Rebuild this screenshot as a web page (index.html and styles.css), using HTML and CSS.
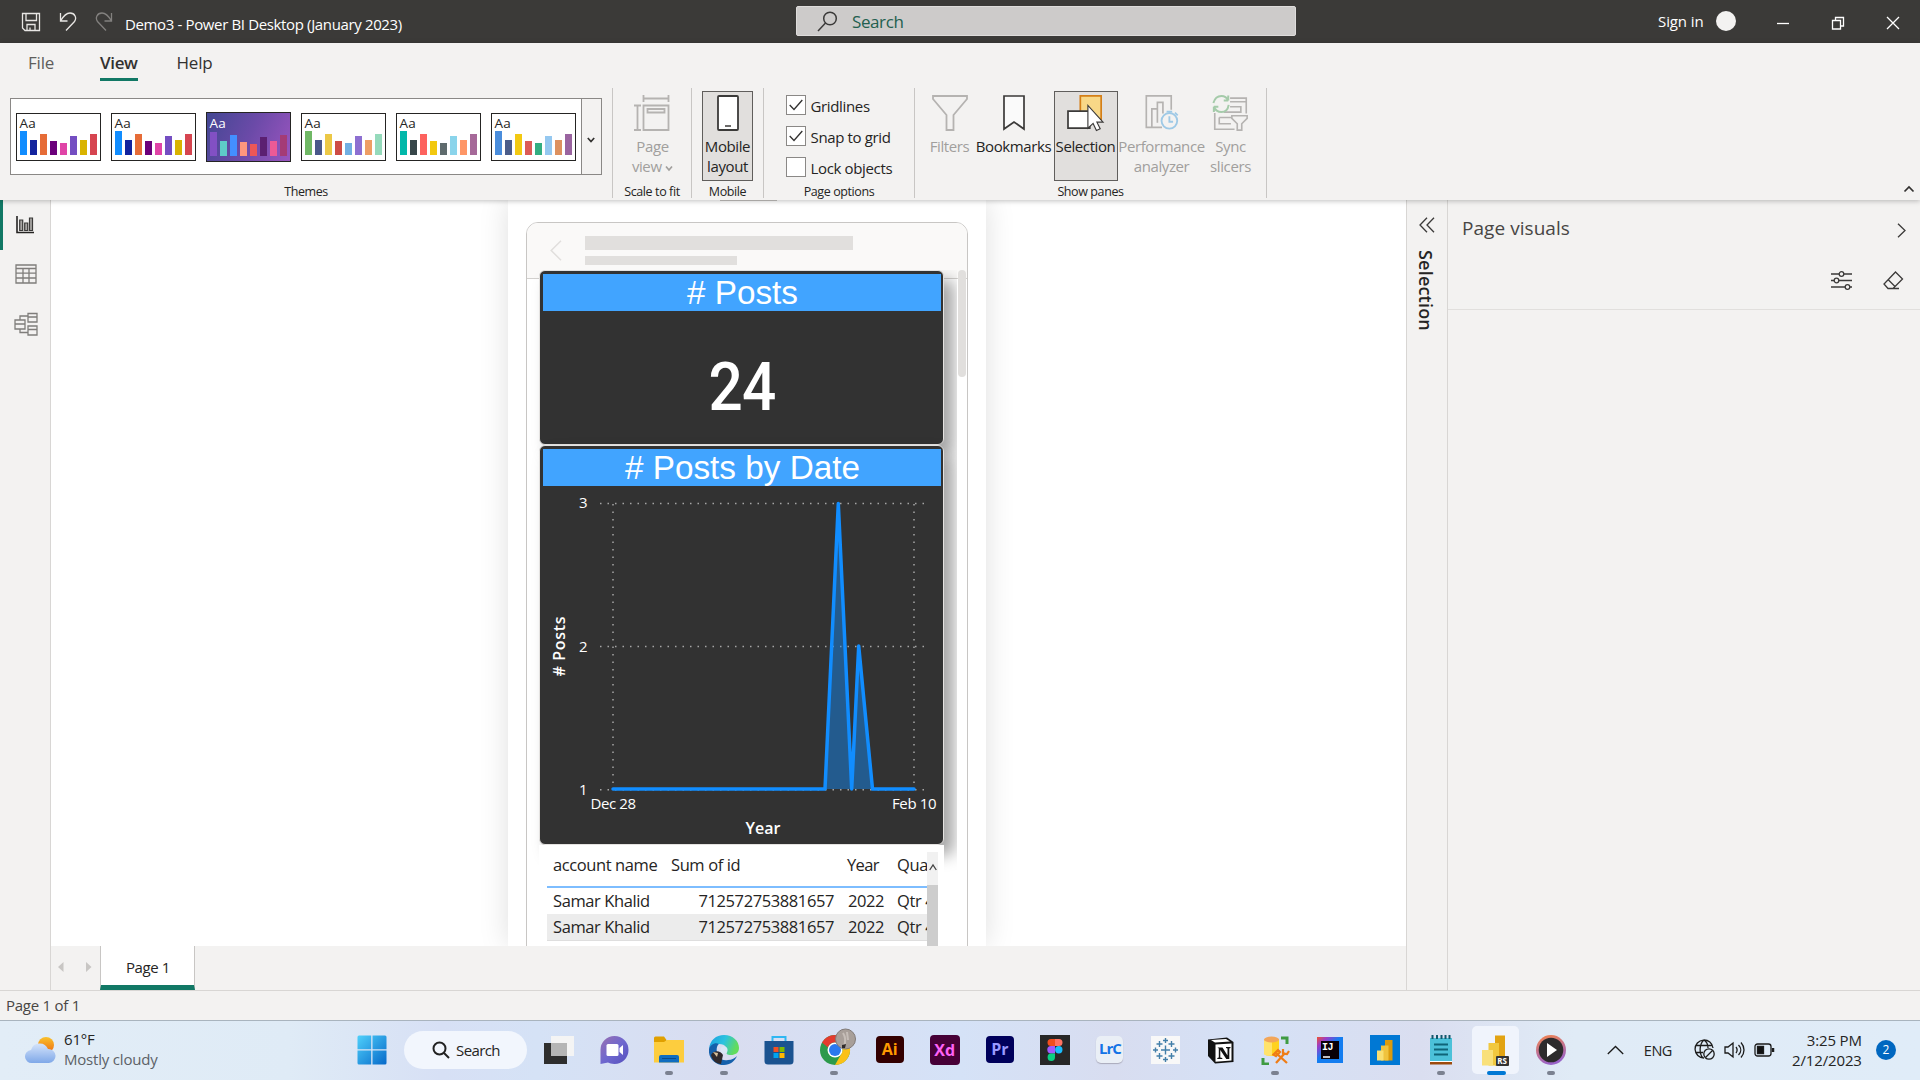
FILE: index.html
```html
<!DOCTYPE html>
<html lang="en">
<head>
<meta charset="utf-8">
<title>Demo3 - Power BI Desktop (January 2023)</title>
<link rel="stylesheet" href="styles.css">
</head>
<body>
<header class="titlebar">
  <div class="quick">
    <svg width="20" height="20" viewBox="0 0 20 20" class="ln"><path d="M1.5 1.500h17v17H4L1.500 16zM5 1.500v7h10.500v-7M6 18.500v-6h8v6M9 18.500v-3"/></svg>
    <svg width="18" height="20" viewBox="0 0 18 20" class="ln"><path d="M1.500 1v8h7M1.500 9C5 3 8 1 11 1c5 0 7 5 4.500 8.500L7 18.500"/></svg>
    <svg width="18" height="20" viewBox="0 0 18 20" class="ln dim"><path d="M16.500 1v8h-7M16.500 9C13 3 10 1 7 1 2 1 0 6 2.500 9.500L11 18.500"/></svg>
    <span class="doc">Demo3 - Power BI Desktop (January 2023)</span>
  </div>
  <div class="search">
    <svg width="21" height="21" viewBox="0 0 21 21"><circle cx="13" cy="7.500" r="6.300"/><path d="M8.500 12 1 20"/></svg>
    <span>Search</span>
  </div>
  <div class="account"><span>Sign in</span><i class="avatar"></i></div>
  <div class="winctl">
    <svg width="14" height="14" viewBox="0 0 14 14"><path d="M1 7.500h12"/></svg>
    <svg width="14" height="14" viewBox="0 0 14 14"><path d="M1.500 4.500h8v8.500h-8zM4.500 4V1.500h8v8.500H10"/></svg>
    <svg width="14" height="14" viewBox="0 0 14 14"><path d="M1 1l12 12M13 1 1 13"/></svg>
  </div>
</header>

<section class="ribbon">
  <nav class="menu"><a class="file">File</a><a class="active">View</a><a>Help</a></nav>
  <div class="groups">
    <div class="group themes">
      <div class="gallery">
        <div class="thumb t1"><b>Aa</b><i></i></div>
        <div class="thumb t1"><b>Aa</b><i></i></div>
        <div class="thumb t3"><b>Aa</b><i></i></div>
        <div class="thumb t4"><b>Aa</b><i></i></div>
        <div class="thumb t5"><b>Aa</b><i></i></div>
        <div class="thumb t6"><b>Aa</b><i></i></div>
        <div class="drop"><svg width="8" height="6" viewBox="0 0 8 6"><path d="M.8 1 4 4.500 7.200 1"/></svg></div>
      </div>
      <span class="glabel">Themes</span>
    </div>
    <div class="group scale">
      <div class="btn off">
        <svg width="36" height="36" viewBox="0 0 36 36"><path class="g" d="M9.500 10.500h25v24.500h-25zM13.500 14h17v3.500h-17z"/><path class="g" d="M9.500 0v7M34.500 0v7M9.500 3.500h25M0 10.500h7M0 35h7M3.500 10.500V35"/></svg>
        <span>Page<br>view <svg width="8" height="7" viewBox="0 0 8 7"><path d="M1 1.500 4 5l3-3.500" fill="none" stroke="#a19f9d" stroke-width="1.700"/></svg></span>
      </div>
      <span class="glabel">Scale to fit</span>
    </div>
    <div class="group mobile">
      <div class="btn on">
        <svg width="22" height="36" viewBox="0 0 22 36"><rect x="1" y="1" width="20" height="34" rx="1" fill="#fff" stroke="#3b3a39" stroke-width="1.800"/><path d="M8 31h6" stroke="#3b3a39" stroke-width="1.500"/></svg>
        <span>Mobile<br>layout</span>
      </div>
      <span class="glabel">Mobile</span>
    </div>
    <div class="group options">
      <div class="checks">
        <label><i><svg width="14" height="12" viewBox="0 0 14 12"><path d="M.7 6 5 10.500 13.300 1"/></svg></i><span>Gridlines</span></label>
        <label><i><svg width="14" height="12" viewBox="0 0 14 12"><path d="M.7 6 5 10.500 13.300 1"/></svg></i><span>Snap to grid</span></label>
        <label><i></i><span>Lock objects</span></label>
      </div>
      <span class="glabel">Page options</span>
    </div>
    <div class="group panes">
      <div class="prow">
        <div class="btn off filters">
          <svg width="36" height="36" viewBox="0 0 36 36"><path class="g" d="M1 1h34v3L21.500 20v15h-7V20L1 4z"/></svg><span>Filters</span>
        </div>
        <div class="btn bookmarks">
          <svg width="22" height="36" viewBox="0 0 22 36"><path d="M1 1h20v33l-10-7-10 7z" fill="#fafafa" stroke="#3b3a39" stroke-width="1.700"/></svg><span>Bookmarks</span>
        </div>
        <div class="btn on selection">
          <svg width="40" height="38" viewBox="0 0 40 38"><path d="M14 1h22v25H14z" fill="#f8d887" stroke="#d47f17" stroke-width="1.800"/><path d="M1 17h23v18H1z" fill="#fff" stroke="#3b3a39" stroke-width="1.800"/><path d="M22 11v24l5.500-5 3.500 7.500 4-1.800-3.500-7H38z" fill="#fff" stroke="#3b3a39" stroke-width="1.200"/></svg><span>Selection</span>
        </div>
        <div class="btn off perf">
          <svg width="36" height="39" viewBox="0 0 36 39"><path class="g" d="M18 35H1V1h27v15M7 35V15h6v15M13 30V8h6v12"/><circle cx="26" cy="28" r="8.500" fill="#f3f2f1" stroke="#9ec9e6" stroke-width="2"/><path d="M26 23v6h4M23 18h6M32 19l3 3" fill="none" stroke="#9ec9e6" stroke-width="2"/></svg><span>Performance<br>analyzer</span>
        </div>
        <div class="btn off sync">
          <svg width="41" height="40" viewBox="0 0 41 40"><path class="g" d="M20 3.500h18v17M20 7.500h18M20 13h12v6H13M3 20v18h22M8 25h14M8 25v7h13"/><path class="g" fill="#f3f2f1" d="M22 23h17v3l-6 6v7h-5v-7l-6-6z"/><path d="M1.500 9C3 3 7 1 10.500 1s6 2 7.500 5V.5M18 6h-5M18.500 11c-1 6-4.500 8-8 8s-7-2-8.500-6v6M2 13h5" fill="none" stroke="#a5cbaa" stroke-width="2.200"/></svg><span>Sync<br>slicers</span>
        </div>
      </div>
      <span class="glabel">Show panes</span>
    </div>
    <svg class="collapse" width="12" height="8" viewBox="0 0 12 8"><path d="M1.500 6.500 6 2l4.500 4.500"/></svg>
  </div>
</section>

<main class="main">
  <aside class="rail">
    <div class="rb active"><svg width="18" height="18" viewBox="0 0 18 18"><path d="M1 0v16.500h17" stroke="#252423" stroke-width="1.600"/><path d="M3.700 4h3v10.500h-3zM8.700 7h3v7.500h-3zM13.500 2h3v12.500h-3z" fill="#a8a6a4" stroke="#3b3a39" stroke-width="1.200"/></svg></div>
    <div class="rb"><svg width="22" height="20" viewBox="0 0 22 20"><path d="M1 1h20v18H1zM1 4.500h20M1 9.200h20M1 14h20M8 4.500V19M14 4.500V19"/></svg></div>
    <div class="rb"><svg width="24" height="24" viewBox="0 0 24 24"><path d="M1 8h10v9H1zM1 12h10M14 1.500h9V10h-9zM14 5h9M14 14h9v9h-9zM14 17.500h9M6 8V4h8M6 17v3.500h8"/></svg></div>
  </aside>
  <section class="work">
    <div class="canvas">
      <i class="grip"></i>
      <div class="page">
        <div class="phone">
          <div class="phead">
            <svg width="12" height="21" viewBox="0 0 12 21"><path d="M11 .8 1.200 10.500 11 20.200" fill="none" stroke="#e1dfdd" stroke-width="1.500"/></svg>
            <div class="skeleton"><i></i><i></i></div>
          </div>
          <div class="pbody">
            <div class="visuals">
              <article class="card c1"><h2># Posts</h2><p>24</p></article>
              <article class="card c2"><h2># Posts by Date</h2>
                <svg class="chart" width="403" height="356" viewBox="540 486 403 356">
                  <g class="grid"><path d="M600 503.500h325M600 646.500h325M600 789.700h325"/><path d="M613 504v286M914 504v286"/></g>
                  <path class="area" d="M825 789 838.500 503 852 789zM852 789 858.500 646 872.500 789z"/>
                  <path class="line" d="M613 789H825L838.300 503.500 851.700 789 858.700 646 872.500 789H914"/>
                  <g class="ticks">
                    <text x="579" y="508" textLength="8.500">3</text><text x="579" y="652" textLength="8.500">2</text><text x="579" y="795" textLength="8.500">1</text>
                    <text x="590.500" y="809" textLength="45.500">Dec 28</text><text x="892" y="809" textLength="44.500">Feb 10</text>
                  </g>
                  <text class="axis" x="745.500" y="834" textLength="35">Year</text>
                  <text class="axis" transform="translate(564.800 676.500) rotate(-90)" textLength="60"># Posts</text>
                </svg>
              </article>
              <div class="tablewrap">
                <div class="table">
                  <div class="tr th"><span>account name</span><span>Sum of id</span><span>Year</span><span>Quarter</span></div>
                  <div class="tr"><span>Samar Khalid</span><span>712572753881657</span><span>2022</span><span>Qtr 4</span></div>
                  <div class="tr alt"><span>Samar Khalid</span><span>712572753881657</span><span>2022</span><span>Qtr 4</span></div>
                </div>
                <div class="vscroll"><svg width="8" height="8" viewBox="0 0 8 8"><path d="M.7 7 4 2l3.300 5" fill="none" stroke="#444" stroke-width="1.300"/></svg><i></i></div>
              </div>
            </div>
            <i class="pscroll"></i>
          </div>
        </div>
      </div>
    </div>
    <div class="tabs">
      <div class="arrows"><svg width="35" height="12" viewBox="0 0 35 12"><path d="M6.500 1v10L1 6zM29 1v10l5.500-5z" fill="#c8c6c4"/></svg></div>
      <div class="tab">Page 1</div>
    </div>
  </section>
  <aside class="selpane">
    <svg width="16" height="16" viewBox="0 0 16 16"><path d="M8 .8 1 8l7 7.200M15 .8 8 8l7 7.200"/></svg>
    <span>Selection</span>
  </aside>
  <aside class="visualpane">
    <div class="vtop"><h3>Page visuals</h3><svg width="9" height="15" viewBox="0 0 9 15"><path d="M1 .7 8 7.500 1 14.300"/></svg></div>
    <div class="vtools">
      <svg width="21" height="19" viewBox="0 0 21 19"><path d="M0 3h8M13 3h8M0 9.500h3M8 9.500h13M0 16h14M19 16h2"/><circle cx="10.500" cy="3" r="2.300"/><circle cx="5.500" cy="9.500" r="2.300"/><circle cx="16.500" cy="16" r="2.300"/></svg>
      <svg width="21" height="19" viewBox="0 0 21 19"><path d="M12.500 1 19.500 8 10 17.500H5L1 13zM5 8.500l7 7M5 17.500h11"/></svg>
    </div>
  </aside>
</main>
<div class="status">Page 1 of 1</div>

<footer class="taskbar">
  <div class="weather">
    <svg width="31" height="27" viewBox="0 0 31 27"><defs><linearGradient id="sun" x2="0" y2="1"><stop stop-color="#f9c22c"/><stop offset="1" stop-color="#ee6b12"/></linearGradient><linearGradient id="cl" x2="0" y2="1"><stop stop-color="#d5e4fb"/><stop offset="1" stop-color="#7fa8e8"/></linearGradient></defs><circle cx="21" cy="8" r="8" fill="url(#sun)"/><path d="M7 26a6.500 6.500 0 0 1-1-13 9 9 0 0 1 17-1 7 7 0 0 1 1 14z" fill="url(#cl)"/></svg>
    <span>61°F<br><em>Mostly cloudy</em></span>
  </div>
  <div class="apps">
    <div class="app win"><svg width="30" height="30" viewBox="0 0 30 30"><defs><linearGradient id="w" x2="1" y2="1"><stop stop-color="#4fd0fb"/><stop offset="1" stop-color="#0669c9"/></linearGradient></defs><path d="M2 .5h12.200v13.700H.500V2A1.500 1.500 0 0 1 2 .500zM15.500.500H28A1.500 1.500 0 0 1 29.500 2v12.200h-14zM.500 15.500h13.700v14H2A1.500 1.500 0 0 1 .500 28zM15.500 15.500h14V28a1.500 1.500 0 0 1-1.500 1.500H15.500z" fill="url(#w)"/></svg></div>
    <div class="pill"><svg width="18" height="18" viewBox="0 0 18 18"><circle cx="7.500" cy="7.500" r="6" fill="none" stroke="#222" stroke-width="2"/><path d="m12 12 5 5" stroke="#222" stroke-width="2"/></svg><span>Search</span></div>
    <div class="app"><svg width="30" height="28" viewBox="0 0 30 28"><path d="M0 7h23v21H0z" fill="#2e2e2e"/><path d="M7 0h23v20H7z" fill="#f4f4f4"/><path d="M7 7h16v13H7z" fill="#b5b5b5"/></svg></div>
    <div class="app"><svg width="29" height="28" viewBox="0 0 29 28"><defs><linearGradient id="ch" x2="1" y2="1"><stop stop-color="#9a70b0"/><stop offset=".5" stop-color="#6f68cf"/><stop offset="1" stop-color="#5550bd"/></linearGradient></defs><path d="M.500 28V14a14 14 0 1 1 14 14c-3 0-5-1-6.500-1.500z" fill="url(#ch)"/><rect x="6.500" y="8" width="12" height="12" rx="1.500" fill="#fff"/><path d="M19.500 12 23 9v10l-3.500-3z" fill="#fff"/></svg></div>
    <div class="app run"><svg width="30" height="28" viewBox="0 0 30 28"><path d="M0 2a1.500 1.500 0 0 1 1.500-1.500H10L12.500 4v5H0z" fill="#e0a000"/><path d="M0 6h10l3-2h17v22.500H0z" fill="#fdcd3e"/><path d="M5 26.500V21a2 2 0 0 1 2-2h16a2 2 0 0 1 2 2v5.500z" fill="#0f6dc0"/><path d="M8 22.500h14" stroke="#0a4a8a"/></svg></div>
    <div class="app run"><svg width="30" height="30" viewBox="0 0 30 30"><defs><linearGradient id="eg" x2="1" y2=".3"><stop stop-color="#1b9de0"/><stop offset=".55" stop-color="#2cc3df"/><stop offset="1" stop-color="#63dc5b"/></linearGradient></defs><path d="M0 14C1 5 7 0 15 0c9 0 15 6 15 13 0 5-4 7-8 7-4 0-5-1-4-3 1-3-1-8-8-8-5 0-9 2-10 5z" fill="url(#eg)"/><path d="M0 14c1-4 6-7 10-5-4 2-4 18 9 16 4 0 7-2 9-4-2 5-7 9-13 9C6 30-1 23 0 14z" fill="#1560ab"/><path d="M2 20c3-6 10-4 12 0l-2 9C7 29 3 25 2 20z" fill="#302a2d"/><circle cx="15" cy="15" r="3.500" fill="#d9e7f5"/><path d="M4 17l5 1-1 4z" fill="#d7c09b"/></svg></div>
    <div class="app"><svg width="30" height="30" viewBox="0 0 30 30"><path d="M8.500 7V2h13v5" fill="none" stroke="#30b7f2" stroke-width="2"/><path d="M.500 6h29v20a3.500 3.500 0 0 1-3.500 3.500H4A3.500 3.500 0 0 1 .500 26z" fill="#1b5390"/><path d="M9.500 12h5v5h-5z" fill="#f25022"/><path d="M15.500 12h5v5h-5z" fill="#7fba00"/><path d="M9.500 18h5v5h-5z" fill="#00a4ef"/><path d="M15.500 18h5v5h-5z" fill="#ffb900"/></svg></div>
    <div class="app run"><svg class="chrome" width="38" height="38" viewBox="0 -7 38 38"><circle cx="15" cy="15" r="15" fill="#2c9a4b"/><path d="M2 7.500A15 15 0 0 1 28 7.500H15a7.500 7.500 0 0 0-7 5z" fill="#e33b2e"/><path d="M28 7.500A15 15 0 0 1 15 30l6.500-11.500A7.500 7.500 0 0 0 21 10V7.500z" fill="#fbc116"/><circle cx="15" cy="15" r="7.500" fill="#fff"/><circle cx="15" cy="15" r="6" fill="#2b78ee"/><circle cx="25.500" cy="4" r="10" fill="#a89f99" stroke="#817a77"/><path d="M23 -2c2 3 3 8 1 13M27-3l1 8" fill="none" stroke="#c6beb8" stroke-width="2"/><path d="M22 10l4-1-1 4h-3z" fill="#2f2b2b"/></svg></div>
    <div class="app"><div class="adobe ai">Ai</div></div>
    <div class="app"><div class="adobe xd">Xd</div></div>
    <div class="app"><div class="adobe pr">Pr</div></div>
    <div class="app"><svg width="30" height="30" viewBox="0 0 30 30"><path d="M0 0h30v30H0z" fill="#272727"/><path d="M15 4h-4a3.500 3.500 0 0 0 0 7h4z" fill="#f24e1e"/><path d="M15 4h4a3.500 3.500 0 0 1 0 7h-4z" fill="#ff7262"/><path d="M15 11h-4a3.700 3.700 0 0 0 0 7.400h4z" fill="#a259ff"/><circle cx="18.800" cy="14.700" r="3.700" fill="#1abcfe"/><path d="M15 18.500h-4a3.700 3.700 0 1 0 4 3.700z" fill="#0acf83"/></svg></div>
    <div class="app"><div class="lrc">LrC</div></div>
    <div class="app"><svg width="29" height="28" viewBox="0 0 29 28"><path d="M0 0h29v28H0z" fill="#f8f8f8"/><path d="M14.500 9.500v9M10 14h9M14.500 2v5M12 4.500h5M14.500 21v5M12 23.500h5M4.500 11.500v5M2 14h5M24.500 11.500v5M22 14h5M8.500 5v6M5.500 8h6M20.500 5v6M17.500 8h6M8.500 17v6M5.500 20h6M20.500 17v6M17.500 20h6" stroke="#437fa9" stroke-width="1.400"/></svg></div>
    <div class="app"><svg width="27" height="27" viewBox="0 0 27 27"><path d="M1 2.500 20 .5l6.500 4.500V25L8 26.500 1 19z" fill="#111"/><path d="M4 3 19 2l4 2.500L8 5.500z" fill="#fff"/><path d="M8.500 7.500 24.500 6.500v17l-16 1.200z" fill="#fff"/><path d="M10.500 10.500h5l5 8v-7l-1.500-.500V10h4.500v1l-1.200.500V22h-3l-6-9v7.500l2 .500v1h-5v-1l1.500-.500v-9z" fill="#111"/></svg></div>
    <div class="app run"><svg width="29" height="29" viewBox="0 0 29 29"><path d="M3 3v14c0 4 15 4 15 0V3z" fill="#ffd21f"/><path d="M3 3v15c1 2 6 2 8 1.500V5z" fill="#ffe36b"/><ellipse cx="10.500" cy="3.500" rx="7.500" ry="3" fill="#f2a65a"/><path d="M20 2h6v6M2 22v6h6" fill="none" stroke="#3f9b42" stroke-width="3"/><path d="m15 27 9-10M15 17l11 10" stroke="#ef7d16" stroke-width="2.300"/><path d="M12.500 18.500 17 14l2 2-4 4zM22 13v4.500l4 .5 2-3" fill="none" stroke="#ef7d16" stroke-width="2.200"/></svg></div>
    <div class="app"><svg width="26" height="26" viewBox="0 0 26 26"><defs><linearGradient id="ij" x2="1" y2="1"><stop stop-color="#f0532d"/><stop offset=".2" stop-color="#9a3bc9"/><stop offset=".45" stop-color="#147df0"/><stop offset="1" stop-color="#147df0"/></linearGradient></defs><path d="M0 0h26v26H0z" fill="url(#ij)"/><path d="M4 4h18v18H4z" fill="#080008"/><text x="5" y="13" class="ijt">IJ</text><path d="M6 20h7" stroke="#fff" stroke-width="1.500"/></svg></div>
    <div class="app"><svg width="30" height="30" viewBox="0 0 30 30"><path d="M0 0h30v30H0z" fill="#0078d4"/><path d="M15 5h7.500v20.500H15z" fill="#dc9b0d"/><path d="M11 10.500h7.500v15H11z" fill="#f0c33e"/><path d="M7 15.500h6.500v10H7z" fill="#f9df72"/></svg></div>
    <div class="app run"><svg width="22" height="30" viewBox="0 0 22 30"><path d="M0 26h22v3.500H0z" fill="#9c4a0d"/><path d="M0 3h22v24H0z" fill="#4cc1d9"/><path d="M0 26.500h22" stroke="#fff"/><path d="M2.500 0v4M7 0v4M11.500 0v4M15.500 0v4M19.500 0v4" stroke="#13586d" stroke-width="2"/><path d="M4 9.500h14M4 14.500h14M4 19.500h14" stroke="#0f6478" stroke-width="2"/></svg></div>
    <div class="app current"><svg width="28" height="31" viewBox="0 0 28 31"><path d="M13 .500h10v30H13z" fill="#e2a312"/><path d="M6.500 8h10.500v22.500H6.500z" fill="#f1c83f"/><path d="M0 15h11v15.500H0z" fill="#f9e07a"/><rect x="14" y="21" width="13" height="10" rx="1" fill="#333"/><text x="15.300" y="29" class="rst">RS</text></svg></div>
    <div class="app run"><svg width="30" height="30" viewBox="0 0 30 30"><defs><linearGradient id="mp" x2=".3" y2="1"><stop stop-color="#f5854a"/><stop offset="1" stop-color="#9a63c8"/></linearGradient></defs><circle cx="15" cy="15" r="15" fill="url(#mp)"/><circle cx="15" cy="15" r="12.300" fill="#2d2b2c"/><path d="M11 8v14l10-7z" fill="#fff"/></svg></div>
  </div>
  <div class="tray">
    <svg class="tl up" width="17" height="10" viewBox="0 0 17 10"><path d="M.8 9 8.500 1.500 16.200 9"/></svg>
    <span class="eng">ENG</span>
    <svg class="tl" width="21" height="21" viewBox="0 0 21 21"><path d="M10 19A9 9 0 1 1 19 9M10 1C5 5 5 15 9 19M10 1c3 2 4 5 4 8M2 6.500h16M2 13.500h7"/><circle cx="15" cy="15" r="5.200"/><path d="m11.500 18.500 7-7"/></svg>
    <svg class="tl spk" width="21" height="18" viewBox="0 0 21 18"><path d="M1 6v6h3l5 4V2L4 6zM12 6c1.500 2 1.500 4 0 6M14.500 4c3 3 3 7 0 10M17 1.500c4 4.500 4 10.500 0 15"/></svg>
    <svg class="tl" width="21" height="14" viewBox="0 0 21 14"><rect x="1" y="1" width="16" height="12" rx="2.500"/><path d="M3.500 3.500h6v7h-6z" fill="#111"/><path d="M19 5v4" stroke-width="2.500"/></svg>
    <span class="clock">3:25 PM<br>2/12/2023</span>
    <span class="badge">2</span>
  </div>
</footer>
</body>
</html>
```
FILE: styles.css
```css
* { box-sizing: border-box; }
body {
  margin: 0; width: 1920px; height: 1080px; overflow: hidden;
  display: flex; flex-direction: column;
  font: 15px/20px "Open Sans", "Noto Sans", sans-serif;
  letter-spacing: -0.03em; color: #252423; background: #f3f2f1;
}
svg { display: block; flex: none; }
i, em { font-style: normal; }

/* title bar */
.titlebar { height: 43px; flex: none; background: #3b3a38; color: #fff; display: flex; align-items: flex-start; }
.quick { width: 796px; display: flex; padding: 12px 0 0 21px; }
.quick svg { margin-right: 18px; }
.quick svg:nth-child(3) { margin-right: 12px; }
.quick .doc { margin-top: 2px; letter-spacing: -0.36px; }
.ln path { fill: none; stroke: #e8e6e4; stroke-width: 1.3; }
.ln.dim path { stroke: #83817f; }
.search { width: 500px; height: 30px; margin-top: 6px; background: #cdcbca; border: 1px solid #dedcdb; border-radius: 2px; display: flex; align-items: center; padding-left: 20px; color: #23604f; font-size: 17px; letter-spacing: -0.4px; }
.search span { padding-top: 1px; }
.search svg { fill: none; stroke: #3b3a39; stroke-width: 1.500; margin-right: 14px; }
.account { margin: 11px 0 0 362px; width: 118px; display: flex; gap: 12px; font-size: 15px; letter-spacing: -0.1px; }
.avatar { width: 20px; height: 20px; border-radius: 50%; background: #f3f2f1; }
.winctl { display: flex; gap: 41px; padding-top: 16px; }
.winctl svg { fill: none; stroke: #fff; stroke-width: 1.300; }

/* ribbon */
.ribbon { height: 157px; flex: none; position: relative; z-index: 2; box-shadow: 0 1px 5px rgba(0,0,0,.25); background: #f3f2f1; }
.menu { height: 45px; display: flex; gap: 39px; padding: 9px 0 0 28px; font-size: 17px; line-height: 22px; color: #323130; letter-spacing: -0.2px; }
.menu a { height: 29px; }
.menu .file { color: #605e5c; margin-right: 7px; }
.menu .active { font-weight: 600; border-bottom: 3px solid #117865; letter-spacing: -0.4px; }
.groups { display: flex; height: 110px; }
.group { border-right: 1px solid #c8c6c4; display: flex; flex-direction: column; align-items: center; justify-content: space-between; }
.glabel { font-size: 12.500px; line-height: 12px; letter-spacing: -0.4px; }
.themes { width: 613px; padding-top: 10px; }
.scale { width: 79px; padding-top: 3px; }
.mobile { width: 72px; padding-top: 3px; }
.options { width: 151px; padding-top: 7px; }
.panes { width: 352px; padding-top: 3px; }
.gallery { width: 592px; height: 77px; margin-left: -1px; border: 1px solid #8a8886; background: #fff; display: flex; align-items: center; gap: 10px; padding-left: 5px; }
.thumb { width: 85px; height: 48px; border: 1px solid #252423; padding: 2px 3px 5px; display: flex; flex-direction: column; justify-content: space-between; }
.thumb b { font-weight: 400; font-size: 13.500px; line-height: 14px; letter-spacing: .3px; }
.thumb i {
  height: 24px;
  background:
    linear-gradient(var(--a) 0 0) 0 100% / 7px 24px,
    linear-gradient(var(--b) 0 0) 10px 100% / 7px 15px,
    linear-gradient(var(--c) 0 0) 20px 100% / 7px 21px,
    linear-gradient(var(--d) 0 0) 30px 100% / 7px 14px,
    linear-gradient(var(--e) 0 0) 40px 100% / 7px 12px,
    linear-gradient(var(--f) 0 0) 50px 100% / 7px 19px,
    linear-gradient(var(--g) 0 0) 60px 100% / 7px 15px,
    linear-gradient(var(--h) 0 0) 70px 100% / 7px 21px;
  background-repeat: no-repeat;
}
.t1 { --a: #118dff; --b: #12239e; --c: #e66c37; --d: #6b007b; --e: #e044a7; --f: #744ec2; --g: #d9b300; --h: #d64550; }
.t3 { --a: #8250c4; --b: #5ecbc8; --c: #438fff; --d: #ff977e; --e: #eb5757; --f: #5b2071; --g: #ec5a96; --h: #a43b76; height: 50px; padding-top: 3px; background: linear-gradient(115deg, #434793, #6b4aa8 50%, #9a55bf); color: #fff; }
.t4 { --a: #70b865; --b: #4a588a; --c: #ecc846; --d: #cd4c46; --e: #71afe2; --f: #8d6fd1; --g: #ee9e64; --h: #95dabb; }
.t5 { --a: #01b8aa; --b: #374649; --c: #fd625e; --d: #f2c80f; --e: #5f6b6d; --f: #8ad4eb; --g: #fe9666; --h: #a66999; }
.t6 { --a: #4a8ddc; --b: #4c5d8a; --c: #f3c911; --d: #dc5b57; --e: #33ae81; --f: #95c8f0; --g: #dd915f; --h: #9a64a0; }
.drop { width: 20px; height: 75px; margin-left: -5px; background: #f3f2f1; border-left: 1px solid #8a8886; display: grid; place-items: center; padding-top: 6px; }
.drop path, .collapse path { fill: none; stroke: #323130; stroke-width: 1.700; }
.btn { height: 90px; display: flex; flex-direction: column; align-items: center; padding-top: 3px; text-align: center; border: 1px solid transparent; letter-spacing: -0.4px; white-space: nowrap; }
.btn > svg { height: 40px; padding-bottom: 4px; overflow: visible; }
.btn > span { margin-top: 1px; }
.btn span svg { display: inline-block; }
.btn.off { color: #a19f9d; }
.btn.on { background: #e1dfdd; border-color: #605e5c; }
.mobile .btn { width: 51px; }
.scale .btn { margin-left: 1px; }
.g { fill: none; stroke: #b5b3b1; stroke-width: 1.800; }
.checks { width: 129px; margin-left: 22px; display: flex; flex-direction: column; gap: 11px; }
.checks label { display: flex; align-items: center; gap: 5px; height: 20px; font-size: 15px; letter-spacing: -0.35px; white-space: nowrap; }
.checks label span { padding-top: 2px; }
.checks i { width: 20px; height: 20px; border: 1px solid #8a8886; background: #fff; display: grid; place-items: center; }
.checks path { fill: none; stroke: #323130; stroke-width: 1.300; }
.prow { display: flex; width: 340px; margin-left: 2px; }
.filters { width: 56px; }
.bookmarks { width: 72px; }
.selection { width: 64px; margin-left: 4px; }
.perf { width: 86px; margin-left: 1px; }
.sync { width: 52px; }
.collapse { margin: 97px 0 0 636px; }

/* work area */
.main { flex: none; height: 791px; display: flex; border-bottom: 1px solid #d8d6d4; }
.rail { width: 51px; border-right: 1px solid #d8d6d4; }
.rb { height: 50px; display: grid; place-items: center; padding: 0 0 2px 1px; }
.rb svg { fill: none; stroke: #7f7d7b; stroke-width: 1.300; }
.rb.active { border-left: 3px solid #117865; padding: 0 3px 0 0; }
.work { width: 1355px; }
.canvas { height: 746px; background: #fff; overflow: hidden; position: relative; display: flex; justify-content: center; }
.grip { position: absolute; left: 669px; top: 0; width: 57px; height: 1px; background: #a8a6a4; z-index: 3; }
.page { width: 478px; margin-left: 37px; background: #fff; box-shadow: 0 0 28px rgba(0,0,0,.13); padding: 22px 18px 0; }
.phone { height: 760px; border: 1px solid #c8c6c4; border-radius: 12px 12px 0 0; overflow: hidden; }
.phead { height: 56px; background: #faf9f8; border-bottom: 1px solid #d2d0ce; display: flex; padding: 13px 0 0 23px; gap: 23px; }
.phead svg { margin-top: 4px; }
.skeleton i { display: block; width: 268px; height: 14px; background: #e1dfdd; margin-bottom: 6px; }
.skeleton i + i { width: 152px; height: 9px; }
.pbody { display: flex; margin-top: -9px; position: relative; }
.visuals { width: 430px; height: 700px; padding-left: 12px; overflow: hidden; }
.card { width: 405px; background: #323232; border: 1px solid #e4e2e0; border-radius: 6px; padding: 3px 2px 0 3px; box-shadow: 10px 10px 16px rgba(0,0,0,.36); }
.card h2 { margin: 0; height: 37px; background: #41a4ff; color: #fff; text-align: center; font: 33.300px/37px "Liberation Sans", Arial, sans-serif; letter-spacing: 0; padding-left: 1px; }
.c1 { height: 175px; }
.c1 p { margin: 37px 0 0; text-align: center; color: #fff; font: 500 67px/78px Roboto, sans-serif; letter-spacing: -1px; transform: scaleX(.9); }
.c2 { height: 400px; position: relative; }
.chart { margin-left: -3px; }
.grid path { stroke: #a5a5a5; stroke-width: 1.500; stroke-dasharray: 1.500 6; fill: none; }
.area { fill: #118dff; opacity: .45; }
.line { fill: none; stroke: #118dff; stroke-width: 3.500; stroke-linejoin: round; stroke-linecap: round; }
.ticks { font-size: 15px; fill: #fff; letter-spacing: 0; }
.axis { font-size: 16px; font-weight: 600; fill: #fff; letter-spacing: 0; }
.tablewrap { position: relative; width: 405px; height: 110px; background: #fff; padding: 7px 0 0 8px; display: flex; }
.table { width: 380px; overflow: hidden; font-size: 16.500px; letter-spacing: -0.4px; }
.tr { height: 26px; padding-left: 6px; display: grid; grid-template-columns: 118px 163px 63px 90px; line-height: 25px; white-space: nowrap; }
.tr.th { height: 36px; line-height: 25px; border-bottom: 2px solid #7dbdff; }
.tr span:nth-child(2) { text-align: right; }
.tr.th span:nth-child(2) { text-align: left; }
.tr span:nth-child(3) { padding-left: 14px; }
.tr.th span:nth-child(3) { padding-left: 13px; letter-spacing: -0.6px; }
.tr.alt { background: #ececec; border-bottom: 1px solid #dedede; height: 27px; }
.vscroll { width: 11px; height: 100px; background: #f1f1f1; padding-top: 11px; }
.vscroll svg { margin: 0 auto; }
.vscroll i { display: block; height: 70px; margin-top: 14px; background: #cdcdcd; }
.pscroll { width: 8px; height: 107px; margin-left: 1px; border-radius: 4px; background: #e1dfdd; }
.tabs { height: 44px; display: flex; }
.arrows { width: 49px; padding: 15px 0 0 6px; }
.tab { width: 95px; height: 44px; background: #fff; border: 1px solid #c8c6c4; border-top: 0; border-bottom: 5px solid #117865; text-align: center; padding: 11px 0 0 1px; font-weight: 500; letter-spacing: -0.4px; }

/* panes */
.selpane { width: 42px; border-left: 1px solid #d8d6d4; border-right: 1px solid #d8d6d4; padding: 17px 0 0 12px; }
.selpane svg, .vtop svg, .vtools svg { fill: none; stroke: #3b3a39; stroke-width: 1.300; }
.selpane span { display: block; writing-mode: vertical-rl; margin: 17px 0 0 -4px; font-size: 18px; font-weight: 600; letter-spacing: .2px; line-height: 22px; }
.visualpane { width: 472px; }
.vtop { display: flex; justify-content: space-between; padding: 17px 14px 0 14px; }
.vtop h3 { margin: 0; font-size: 19px; line-height: 22px; font-weight: 500; color: #484644; letter-spacing: 0.05px; }
.vtop svg { margin-top: 6px; }
.vtools { height: 71px; border-bottom: 1px solid #e1dfdd; display: flex; justify-content: flex-end; gap: 31px; padding: 32px 16px 0 0; }
.status { height: 29px; flex: none; padding: 4px 6px; color: #484644; letter-spacing: -0.25px; }

/* taskbar */
.taskbar { height: 60px; flex: none; border-top: 1px solid #a9b4be; display: flex; align-items: flex-start; background: linear-gradient(90deg, #e2edf7 0, #dfebf6 15%, #d7e0f5 23%, #d5e2f6 28%, #d9ddf0 38%, #d5e2f7 50%, #d8ddf0 58%, #d5e1f6 65%, #dadef0 74%, #e0ebf6 82%, #e0ecf8 100%); }
.weather { width: 344px; display: flex; padding: 16px 0 0 25px; gap: 8px; }
.weather span { margin-top: -8px; letter-spacing: -0.2px; }
.weather em { color: #5c6166; }
.apps { display: flex; height: 58px; }
.app { width: 55.100px; height: 58px; display: grid; place-items: center; position: relative; padding-left: 1px; }
.app > svg, .app > div { position: relative; }
.app.win { width: 54px; }
.pill { width: 123px; height: 38px; margin: 10px 4px 0 6px; border-radius: 19px; background: #f2f6fd; display: flex; align-items: center; gap: 6px; padding-left: 28px; letter-spacing: -0.6px; font-weight: 500; }
.run::after, .current::after { content: ""; position: absolute; bottom: 4px; left: 24px; width: 8px; height: 4px; border-radius: 2px; background: #7b8190; }
.current::before { content: ""; position: absolute; left: 4px; top: 5px; width: 47px; height: 48px; border-radius: 5px; background: #f0f4fc; }
.current::after { left: 19px; width: 19px; background: #0078d4; }
.chrome { margin: -7px 0 0 8px; }
.adobe { width: 28px; height: 27px; border-radius: 4px; text-align: center; font-weight: 700; font-size: 16px; line-height: 26px; letter-spacing: 0; margin-top: -2px; }
.ai { background: #330000; color: #ff9a00; }
.xd { width: 30px; height: 30px; line-height: 30px; background: #470137; color: #ff61f6; margin-top: 0; }
.pr { background: #00005b; color: #9999ff; }
.lrc { width: 27px; height: 27px; border-radius: 5px; background: #eaeff6; color: #1473e6; font-weight: 700; font-size: 15px; line-height: 25px; text-align: center; letter-spacing: -1px; box-shadow: 0 1px 1px #aab; margin-top: -1px; }
.ijt { font: 700 10px "Liberation Mono", monospace; fill: #fff; }
.rst { font: 700 8px "Open Sans", sans-serif; fill: #fff; letter-spacing: 0; }
.tray { display: flex; align-items: center; height: 57px; margin-left: 29px; }
.tl { fill: none; stroke: #1b1b1b; stroke-width: 1.300; }
.eng { margin: 2px 20px 0 20px; font-size: 14.500px; width: 30px; }
.spk { margin: 0 9px 0 9px; }
.clock { width: 87px; text-align: right; margin-right: 14px; letter-spacing: -0.15px; }
.badge { width: 20px; height: 20px; border-radius: 50%; background: #0067c0; color: #fff; text-align: center; font-size: 12px; line-height: 20px; }
```
